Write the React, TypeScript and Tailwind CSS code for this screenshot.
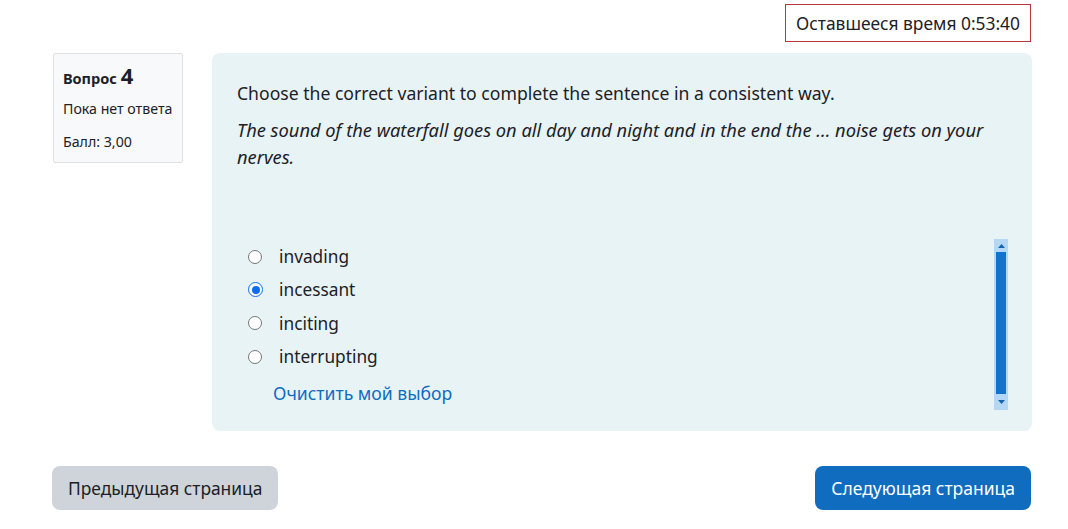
import React from "react";

const options = ["invading", "incessant", "inciting", "interrupting"];

function Radio({ checked }: { checked: boolean }) {
  return checked ? (
    <span className="flex h-[15px] w-[15px] items-center justify-center rounded-full border-[1.5px] border-[#0f6cf0] bg-white">
      <span className="h-[8px] w-[8px] rounded-full bg-[#0f6cf0]" />
    </span>
  ) : (
    <span className="h-[14px] w-[14px] rounded-full border border-[#767676] bg-white" />
  );
}

function FakeScrollbar() {
  return (
    <div className="flex h-[171px] w-[14px] flex-col bg-[#b3d7f5]">
      <div className="flex h-[13px] items-center justify-center">
        <svg width="7" height="4" viewBox="0 0 7 4">
          <path d="M0 4 L3.5 0 L7 4 Z" fill="#1565b5" />
        </svg>
      </div>
      <div className="mx-[2px] flex-1 bg-[#1273cc]" />
      <div className="flex h-[16px] items-center justify-center">
        <svg width="7" height="4" viewBox="0 0 7 4">
          <path d="M0 0 L3.5 4 L7 0 Z" fill="#1565b5" />
        </svg>
      </div>
    </div>
  );
}

export default function App() {
  return (
    <div
      className="h-[529px] w-[1068px] overflow-hidden bg-white text-[#1d2125]"
      style={{ fontFamily: '"Segoe UI", "Noto Sans", sans-serif' }}
    >
      <div className="flex justify-end pr-[37px] pt-[4px]">
        <div className="flex h-[38px] items-center border border-[#b8363a] px-[10px] text-[17.4px]">
          Оставшееся время 0:53:40
        </div>
      </div>

      <div className="mt-[11px] flex pl-[53px]">
        <div className="h-[110px] w-[130px] rounded-[2px] border border-[#dee2e6] bg-[#f8f9fa] px-[9px] pt-[8px]">
          <div className="flex items-baseline gap-[4px] font-bold">
            <span className="text-[14.5px]">Вопрос</span>
            <span className="text-[22px] leading-[26px]">4</span>
          </div>
          <div className="mt-[9px] text-[14.2px] leading-[20px]">Пока нет ответа</div>
          <div className="mt-[13px] text-[14.2px] leading-[20px]">Балл: 3,00</div>
        </div>

        <div className="ml-[29px] h-[378px] w-[820px] rounded-[8px] bg-[#e7f3f5] pl-[25px] pr-[24px] pt-[27px] text-[17.6px] leading-[27px]">
          <p>Choose the correct variant to complete the sentence in a consistent way.</p>
          <p className="mt-[9px] text-[18.3px] italic">
            The sound of the waterfall goes on all day and night and in the end the ... noise gets on your nerves.
          </p>

          <div className="mt-[69px] flex">
            <div className="flex-1 pt-[1px]">
              {options.map((o, i) => (
                <div key={o} className="flex h-[33.3px] items-center text-[17.3px]">
                  <span className="ml-[11px] flex w-[31px]">
                    <Radio checked={i === 1} />
                  </span>
                  <span>{o}</span>
                </div>
              ))}
              <div className="ml-[36px] mt-[7px] text-[#0f6cbf]">Очистить мой выбор</div>
            </div>
            <FakeScrollbar />
          </div>
        </div>
      </div>

      <div className="mt-[35px] flex justify-between pl-[52px] pr-[37px]">
        <button className="h-[44px] rounded-[8px] bg-[#ced4da] px-[16px] text-[17.4px] text-[#1d2125]">
          Предыдущая страница
        </button>
        <button className="h-[44px] rounded-[8px] bg-[#0f6cbf] px-[16px] text-[17.5px] text-white">
          Следующая страница
        </button>
      </div>
    </div>
  );
}
